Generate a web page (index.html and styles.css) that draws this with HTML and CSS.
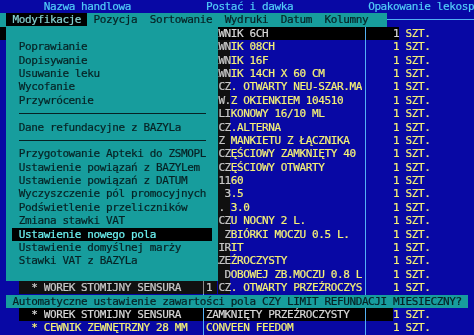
FILE: index.html
```html
<!DOCTYPE html>
<html lang="pl">
<head>
  <meta charset="UTF-8" />
  <title>Lekospis - Modyfikacje</title>
  <link rel="stylesheet" href="styles.css">
</head>
<body>

  <div class="screen">

    <div class="row head">
      <span></span><span></span><span>Nazwa handlowa</span><span></span><span>Postać i dawka</span><span></span><span class="wide">Opakowanie lekosp</span>
    </div>

    <div class="menubar">
      <div class="menu"><span class="open"> Modyfikacje </span> Pozycja  Sortowanie  Wydruki  Datum  Kolumny</div>
      <div class="hline"></div>
    </div>

    <div class="row sel"><span></span><span></span><span></span><span class="sep"></span><span>CEWNIK 6CH</span><span class="sep"></span><span></span><span>1</span><span class="unit"> SZT.</span></div>
    <div class="row"><span></span><span></span><span></span><span class="sep"></span><span>CEWNIK 08CH</span><span class="sep"></span><span></span><span>1</span><span> SZT.</span></div>
    <div class="row"><span></span><span></span><span></span><span class="sep"></span><span>CEWNIK 16F</span><span class="sep"></span><span></span><span>1</span><span> SZT.</span></div>
    <div class="row"><span></span><span></span><span></span><span class="sep"></span><span>CEWNIK 14CH X 60 CM</span><span class="sep"></span><span></span><span>1</span><span> SZT.</span></div>
    <div class="row"><span></span><span></span><span></span><span class="sep"></span><span>1 CZ. OTWARTY NEU-SZAR.MA</span><span class="sep"></span><span></span><span>1</span><span> SZT.</span></div>
    <div class="row"><span></span><span></span><span></span><span class="sep"></span><span>  W.Z OKIENKIEM 104510</span><span class="sep"></span><span></span><span>1</span><span> SZT.</span></div>
    <div class="row"><span></span><span></span><span></span><span class="sep"></span><span>SILIKONOWY 16/10 ML</span><span class="sep"></span><span></span><span>1</span><span> SZT.</span></div>
    <div class="row"><span></span><span></span><span></span><span class="sep"></span><span>1 CZ.ALTERNA</span><span class="sep"></span><span></span><span>1</span><span> SZT.</span></div>
    <div class="row"><span></span><span></span><span></span><span class="sep"></span><span>  Z MANKIETU Z ŁĄCZNIKA</span><span class="sep"></span><span></span><span>1</span><span> SZT.</span></div>
    <div class="row"><span></span><span></span><span></span><span class="sep"></span><span>1 CZĘŚCIOWY ZAMKNIĘTY 40</span><span class="sep"></span><span></span><span>1</span><span> SZT.</span></div>
    <div class="row"><span></span><span></span><span></span><span class="sep"></span><span>1 CZĘŚCIOWY OTWARTY</span><span class="sep"></span><span></span><span>1</span><span> SZT.</span></div>
    <div class="row"><span></span><span></span><span></span><span class="sep"></span><span>  1160</span><span class="sep"></span><span></span><span>1</span><span> SZT</span></div>
    <div class="row"><span></span><span></span><span></span><span class="sep"></span><span>   3.5</span><span class="sep"></span><span></span><span>1</span><span> SZT.</span></div>
    <div class="row"><span></span><span></span><span></span><span class="sep"></span><span>  . 3.0</span><span class="sep"></span><span></span><span>1</span><span> SZT.</span></div>
    <div class="row"><span></span><span></span><span></span><span class="sep"></span><span>  CZU NOCNY 2 L.</span><span class="sep"></span><span></span><span>1</span><span> SZT.</span></div>
    <div class="row"><span></span><span></span><span></span><span class="sep"></span><span>   ZBIÓRKI MOCZU 0.5 L.</span><span class="sep"></span><span></span><span>1</span><span> SZT.</span></div>
    <div class="row"><span></span><span></span><span></span><span class="sep"></span><span>  IRIT</span><span class="sep"></span><span></span><span>1</span><span> SZT.</span></div>
    <div class="row"><span></span><span></span><span></span><span class="sep"></span><span>PRZEŹROCZYSTY</span><span class="sep"></span><span></span><span>1</span><span> SZT.</span></div>
    <div class="row"><span></span><span></span><span></span><span class="sep"></span><span>   DOBOWEJ ZB.MOCZU 0.8 L</span><span class="sep"></span><span></span><span>1</span><span> SZT.</span></div>
    <div class="row"><span></span><span>  * </span><span>WOREK STOMIJNY SENSURA</span><span class="sep"></span><span>1 CZ. OTWARTY PRZEŹROCZYS</span><span class="sep"></span><span></span><span>1</span><span> SZT.</span></div>

    <div class="status">Automatyczne ustawienie zawartości pola CZY LIMIT REFUNDACJI MIESIECZNY?</div>

    <div class="row cur"><span></span><span>  * </span><span>WOREK STOMIJNY SENSURA</span><span class="sep"></span><span>ZAMKNIĘTY PRZEŹROCZYSTY</span><span class="sep"></span><span></span><span>1</span><span> SZT.</span></div>
    <div class="row"><span></span><span>  * </span><span>CEWNIK ZEWNĘTRZNY 28 MM</span><span class="sep"></span><span>CONVEEN FEEDOM</span><span class="sep"></span><span></span><span>1</span><span> SZT.</span></div>

    <div class="dropdown">
      <div>Poprawianie</div>
      <div>Dopisywanie</div>
      <div>Usuwanie leku</div>
      <div>Wycofanie</div>
      <div>Przywrócenie</div>
      <div class="rule"></div>
      <div>Dane refundacyjne z BAZYLa</div>
      <div class="rule"></div>
      <div>Przygotowanie Apteki do ZSMOPL</div>
      <div>Ustawienie powiązań z BAZYLem</div>
      <div>Ustawienie powiązań z DATUM</div>
      <div>Wyczyszczenie pól promocyjnych</div>
      <div>Podświetlenie przeliczników</div>
      <div>Zmiana stawki VAT</div>
      <div class="active">Ustawienie nowego pola</div>
      <div>Ustawienie domyślnej marży</div>
      <div>Stawki VAT z BAZYLa</div>
    </div>

  </div>

</body>
</html>
```

FILE: styles.css
```css
* {
  margin: 0;
  padding: 0;
  box-sizing: border-box;
}

:root {
  --c: 6.24px;
  --r: 13.4px;
  --blue: #0808a4;
  --teal: #179d9d;
  --ink: #072224;
  --line: #52b0f4;
}

body {
  background: var(--blue);
  color: #f6f276;
  font-family: 'DejaVu Sans Mono', monospace;
  font-size: 11px;
  letter-spacing: -0.383px;
  line-height: var(--r);
  -webkit-text-stroke: 0.2px currentColor;
  overflow: hidden;
}

.screen {
  position: relative;
  width: 474px;
  height: 335px;
}

.row {
  display: grid;
  grid-template-columns:
    calc(var(--c) * 3) calc(var(--c) * 4) calc(var(--c) * 25) var(--c)
    calc(var(--c) * 25) var(--c) calc(var(--c) * 4) var(--c) 1fr;
  height: var(--r);
}

.row span {
  overflow: hidden;
  white-space: pre;
}

.row .wide {
  grid-column: span 3;
}

.head {
  color: #52cdf8;
}

.sep {
  background-image: linear-gradient(to right,
    transparent calc(50% - 0.5px), var(--line) calc(50% - 0.5px),
    var(--line) calc(50% + 0.5px), transparent calc(50% + 0.5px));
}

/* highlighted record rows */
.sel span:not(.unit) {
  background-color: #000;
  color: #d8d8d8;
}

.cur span:nth-child(n+2):nth-child(-n+7) {
  background-color: #000;
  color: #d8d8d8;
}

.menubar {
  display: flex;
  height: var(--r);
}

.menu {
  width: calc(var(--c) * 62);
  padding-left: var(--c);
  background: var(--teal);
  color: var(--ink);
  white-space: pre;
}

.menu .open {
  background: #000;
  color: #86d2d2;
}

.hline {
  flex: 1;
  background: linear-gradient(to bottom,
    transparent 6px, var(--line) 6px, var(--line) 7px, transparent 7px);
}

.status {
  width: calc(var(--c) * 74);
  height: var(--r);
  margin-left: var(--c);
  padding-left: var(--c);
  background: var(--teal);
  color: var(--ink);
  white-space: pre;
}

/* Modyfikacje drop-down, drawn over the list */
.dropdown {
  position: absolute;
  left: var(--c);
  top: calc(var(--r) * 2);
  width: calc(var(--c) * 34);
  padding: var(--r) 0;
  background: var(--teal);
  color: var(--ink);
}

.dropdown div {
  height: var(--r);
  padding-left: calc(var(--c) * 2);
  white-space: pre;
}

.dropdown .rule {
  margin: 0 calc(var(--c) * 2);
  padding: 0;
  background: linear-gradient(to bottom,
    transparent 6px, var(--ink) 6px, var(--ink) 7px, transparent 7px);
}

.dropdown .active {
  margin: 0 var(--c);
  padding-left: var(--c);
  background: #000;
  color: #6cf0f0;
}

/* text-mode shadow: characters below turn grey on black */
.dropdown::before,
.dropdown::after {
  content: '';
  position: absolute;
  backdrop-filter: grayscale(1) brightness(0.85);
}

.dropdown::before {
  left: 100%;
  top: var(--r);
  bottom: calc(var(--r) * -1);
  width: calc(var(--c) * 2);
}

.dropdown::after {
  left: calc(var(--c) * 2);
  top: 100%;
  width: calc(var(--c) * 32);
  height: var(--r);
}
```
